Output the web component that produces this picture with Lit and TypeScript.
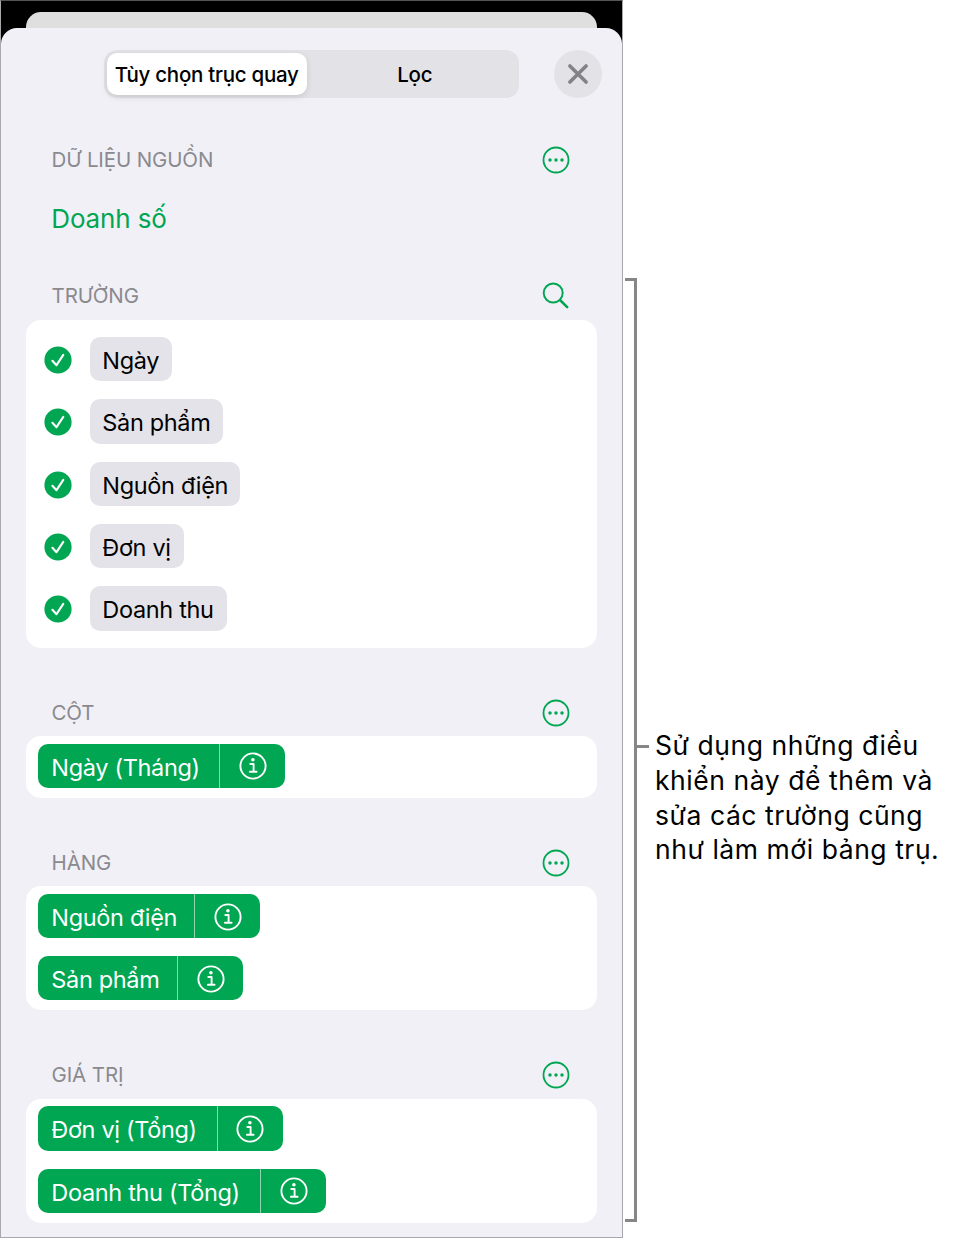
import { css, html, svg, LitElement } from 'lit';
import { customElement, property } from 'lit/decorators.js';
import { classMap } from 'lit/directives/class-map.js';

interface Pill {
  label: string;
  width: number;
}

const FIELDS: Pill[] = [
  { label: 'Ngày', width: 82.5 },
  { label: 'Sản phẩm', width: 133.3 },
  { label: 'Nguồn điện', width: 150 },
  { label: 'Đơn vị', width: 94 },
  { label: 'Doanh thu', width: 137.3 },
];

const COLUMNS: Pill[] = [{ label: 'Ngày (Tháng)', width: 247 }];

const ROWS: Pill[] = [
  { label: 'Nguồn điện', width: 222 },
  { label: 'Sản phẩm', width: 205.3 },
];

const VALUES: Pill[] = [
  { label: 'Đơn vị (Tổng)', width: 244.7 },
  { label: 'Doanh thu (Tổng)', width: 288 },
];

const NOTE = ['Sử dụng những điều', 'khiển này để thêm và', 'sửa các trường cũng', 'như làm mới bảng trụ.'];

const icons = {
  more: svg`
    <circle cx="14" cy="14" r="12.5" fill="none" stroke="currentColor" stroke-width="1.8" />
    <circle cx="8" cy="14" r="1.75" fill="currentColor" />
    <circle cx="14" cy="14" r="1.75" fill="currentColor" />
    <circle cx="20" cy="14" r="1.75" fill="currentColor" />
  `,
  search: svg`
    <circle cx="11.2" cy="11" r="9.5" fill="none" stroke="currentColor" stroke-width="1.9" />
    <path d="M18.2 18.2L25.2 25.1" fill="none" stroke="currentColor" stroke-width="2.6" stroke-linecap="round" />
  `,
  check: svg`
    <circle cx="14" cy="14" r="13.6" fill="currentColor" />
    <path d="M8.4 14.8L12.5 19.2L19.3 8.9" fill="none" stroke="#fff" stroke-width="2.1" stroke-linecap="round" stroke-linejoin="round" />
  `,
  info: svg`
    <circle cx="14" cy="14" r="12.6" fill="none" stroke="currentColor" stroke-width="1.9" />
    <circle cx="13.9" cy="7.7" r="1.8" fill="currentColor" />
    <path d="M11.3 12H14.6V19.7M10.9 19.8H17.6" fill="none" stroke="currentColor" stroke-width="1.9" stroke-linecap="round" stroke-linejoin="round" />
  `,
  close: svg`
    <path d="M5.9 5.9L22.1 22.1M22.1 5.9L5.9 22.1" fill="none" stroke="currentColor" stroke-width="3.6" stroke-linecap="round" />
  `,
};

@customElement('pivot-icon')
export class PivotIcon extends LitElement {
  static styles = css`
    :host {
      display: block;
      flex: none;
      width: 28px;
      height: 28px;
    }

    .icon {
      display: block;
    }
  `;

  @property()
  public name: keyof typeof icons = 'more';

  protected render() {
    return html`<svg class="icon" width="28" height="28" viewBox="0 0 28 28">${icons[this.name]}</svg>`;
  }
}

@customElement('pivot-section')
export class PivotSection extends LitElement {
  static styles = css`
    :host {
      display: block;
    }

    .header {
      display: flex;
      align-items: center;
      justify-content: space-between;
      height: 47px;
      padding: 0 27.5px 0 25.5px;
      color: #00a651;
    }

    .header__title {
      margin: 0;
      font-size: 20.5px;
      font-weight: 400;
      letter-spacing: -0.1px;
      line-height: 28px;
      color: #8a8a8e;
    }

    .card {
      display: flex;
      flex-direction: column;
      gap: 17.9px;
      padding: 7.6px 12px 9.7px;
      border-radius: 15px;
      background-color: #fff;
    }

    .card--fields {
      padding: 17px 17.5px;
    }

    .field {
      display: flex;
      align-items: center;
      gap: 18px;
      color: #00a651;
    }

    .field__icon {
      margin-top: 2px;
    }

    .pill {
      display: flex;
      box-sizing: border-box;
      height: 44.4px;
      border-radius: 10px;
      font-size: 23.5px;
      letter-spacing: -0.33px;
      line-height: 47.4px;
      white-space: nowrap;
    }

    .pill--grey {
      padding-left: 12.8px;
      background-color: #e4e3e9;
      color: #000;
    }

    .pill--green {
      padding-left: 13.3px;
      background-color: #00a651;
      color: #fff;
    }

    .pill__label {
      flex: 1;
    }

    .pill__info {
      display: flex;
      align-items: center;
      justify-content: center;
      box-sizing: border-box;
      width: 66px;
      padding-top: 1.4px;
      border-left: 1px solid #8fd6b0;
    }
  `;

  @property()
  public heading: string = '';

  @property()
  public icon: string = 'more';

  @property({ type: Boolean })
  public fields: boolean = false;

  @property({ attribute: false })
  public items: Pill[] = [];

  protected renderItem(item: Pill) {
    if (this.fields) {
      return html`
        <div class="field">
          <pivot-icon class="field__icon" name="check"></pivot-icon>
          <div class="pill pill--grey" style="width: ${item.width}px">${item.label}</div>
        </div>
      `;
    }

    return html`
      <div class="pill pill--green" style="width: ${item.width}px">
        <span class="pill__label">${item.label}</span>
        <span class="pill__info"><pivot-icon name="info"></pivot-icon></span>
      </div>
    `;
  }

  protected render() {
    return html`
      <div class="header">
        <h2 class="header__title">${this.heading}</h2>
        <pivot-icon name=${this.icon}></pivot-icon>
      </div>
      <div class=${classMap({ card: true, 'card--fields': this.fields })}>
        ${this.items.map((item) => this.renderItem(item))}
      </div>
    `;
  }
}

@customElement('app-root')
export default class AppRoot extends LitElement {
  static styles = css`
    :host {
      display: flex;
      width: 955px;
      height: 1240px;
      overflow: hidden;
      background-color: #fff;
      font-family: Inter, 'Liberation Sans', sans-serif;
      color: #000;
    }

    .device {
      display: flex;
      flex: none;
      flex-direction: column;
      box-sizing: border-box;
      width: 623px;
      height: 1238px;
      border: 1px solid #a8a8ac;
      border-top-color: #555;
      background-color: #000;
    }

    .behind {
      flex: none;
      height: 16px;
      margin: 11.3px 25px 0;
      border-radius: 15px 15px 0 0;
      background-color: #dfdfdf;
    }

    .sheet {
      display: flex;
      flex: 1;
      flex-direction: column;
      gap: 41.5px;
      padding: 22px 25px 0;
      border-radius: 16px 16px 0 0;
      background-color: #f1f0f6;
    }

    .toolbar {
      display: flex;
      justify-content: space-between;
      height: 47.7px;
      margin: 0 -5px 0 78px;
    }

    .tabs {
      display: flex;
      box-sizing: border-box;
      width: 415px;
      padding: 3px;
      border-radius: 13px;
      background-color: #e3e2e7;
      font-size: 20.5px;
      font-weight: 500;
      letter-spacing: -0.26px;
      line-height: 43.2px;
      text-align: center;
    }

    .tabs__item {
      flex: 1;
      padding-left: 7px;
    }

    .tabs__item--active {
      flex: none;
      width: 199.5px;
      padding-left: 0;
      border-radius: 10px;
      background-color: #fff;
      box-shadow: 0 2px 6px rgba(0, 0, 0, 0.12);
    }

    .close {
      display: flex;
      align-items: center;
      justify-content: center;
      width: 47.7px;
      border-radius: 50%;
      background-color: #e3e2e7;
      color: #838287;
    }

    .source {
      height: 92px;
    }

    .source__header {
      display: flex;
      align-items: center;
      justify-content: space-between;
      height: 41px;
      padding: 0 27.5px 0 25.5px;
      color: #00a651;
    }

    .source__title {
      margin: 0;
      font-size: 20.5px;
      font-weight: 400;
      letter-spacing: -0.12px;
      line-height: 28px;
      color: #8a8a8e;
    }

    .source__name {
      padding: 18.6px 25.3px 0;
      font-size: 26px;
      letter-spacing: -0.15px;
      line-height: 40px;
      color: #00a651;
    }

    .bracket {
      flex: none;
      box-sizing: border-box;
      width: 12px;
      height: 944.5px;
      margin: 277.5px 0 0 2px;
      border: 3px solid #868686;
      border-left: none;
    }

    .tick {
      flex: none;
      width: 12px;
      height: 3px;
      margin-top: 745px;
      background-color: #868686;
    }

    .note {
      margin: 728.4px 0 0 6px;
      font-size: 26.5px;
      letter-spacing: 0.55px;
      line-height: 34.6px;
      white-space: nowrap;
    }

    .note__line {
      display: block;
    }
  `;

  protected render() {
    return html`
      <div class="device">
        <div class="behind"></div>
        <div class="sheet">
          <div class="toolbar">
            <div class="tabs">
              <div class="tabs__item tabs__item--active">Tùy chọn trục quay</div>
              <div class="tabs__item">Lọc</div>
            </div>
            <div class="close"><pivot-icon name="close"></pivot-icon></div>
          </div>
          <div class="source">
            <div class="source__header">
              <h2 class="source__title">DỮ LIỆU NGUỒN</h2>
              <pivot-icon name="more"></pivot-icon>
            </div>
            <div class="source__name">Doanh số</div>
          </div>
          <pivot-section heading="TRƯỜNG" icon="search" fields .items=${FIELDS}></pivot-section>
          <pivot-section heading="CỘT" .items=${COLUMNS}></pivot-section>
          <pivot-section heading="HÀNG" .items=${ROWS}></pivot-section>
          <pivot-section heading="GIÁ TRỊ" .items=${VALUES}></pivot-section>
        </div>
      </div>
      <div class="bracket"></div>
      <div class="tick"></div>
      <p class="note">${NOTE.map((line) => html`<span class="note__line">${line}</span>`)}</p>
    `;
  }
}
